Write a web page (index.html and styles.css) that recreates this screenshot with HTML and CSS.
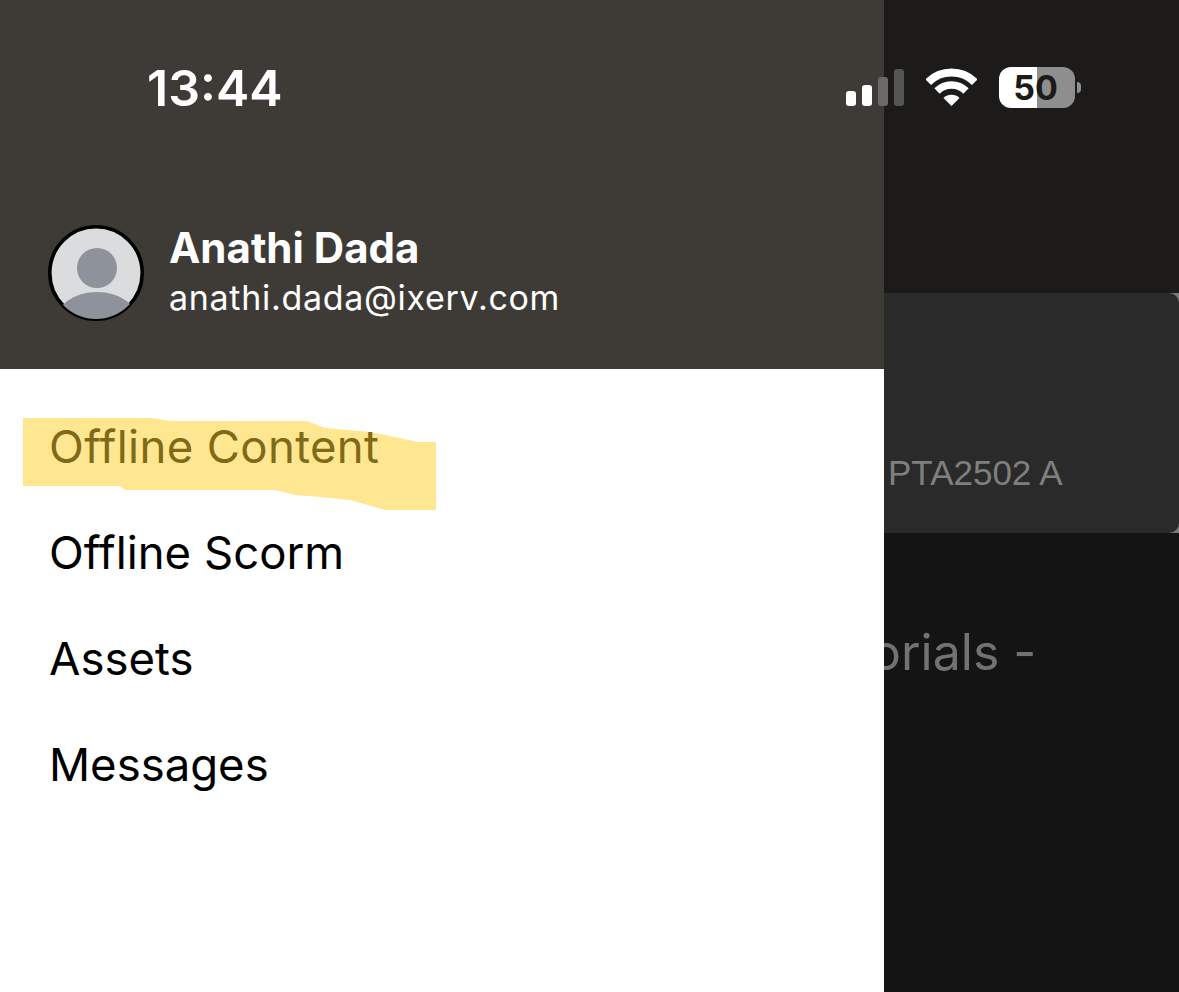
FILE: index.html
```html
<!DOCTYPE html>
<html lang="en">
<head>
    <meta charset="UTF-8">
    <title>Offline Content menu</title>
    <link rel="stylesheet" href="styles.css">
</head>
<body>
    <!-- page behind the drawer -->
    <main class="page">
        <div class="page-top"></div>
        <div class="card-row">
            <div class="card">
                <span class="card-code">PTA2502 A</span>
            </div>
        </div>
        <div class="page-rest">
            <p class="page-title">Tutorials -</p>
        </div>
    </main>

    <aside class="drawer">
        <header class="drawer-head">
            <svg class="avatar" viewBox="0 0 96 96" aria-hidden="true">
                <defs>
                    <clipPath id="avatarClip"><circle cx="48" cy="48" r="46"></circle></clipPath>
                </defs>
                <circle cx="48" cy="48" r="46.2" fill="#dbdcde" stroke="#000" stroke-width="3.6"></circle>
                <circle cx="49" cy="43" r="20" fill="#8e929b"></circle>
                <ellipse cx="49" cy="98" rx="42" ry="31" fill="#8e929b" clip-path="url(#avatarClip)"></ellipse>
            </svg>
            <div class="user">
                <div class="user-name">Anathi Dada</div>
                <div class="user-mail">anathi.dada@ixerv.com</div>
            </div>
        </header>
        <nav class="menu">
            <svg class="marker" viewBox="0 0 413 92" aria-hidden="true">
                <polygon fill="#ffe792" points="0,0 129,0 147,3 284,3 302,10 347,14 372,19 395,24 413,24 413,92 362,92 327,82 297,79 272,77 252,72 102,72 97,68 0,68"></polygon>
            </svg>
            <a class="menu-item menu-item-marked">Offline Content</a>
            <a class="menu-item">Offline Scorm</a>
            <a class="menu-item">Assets</a>
            <a class="menu-item">Messages</a>
        </nav>
    </aside>

    <!-- status bar lies over both the drawer and the page -->
    <div class="status">
        <span class="clock">13:44</span>
        <div class="signal">
            <i class="bar bar1"></i>
            <i class="bar bar2"></i>
            <i class="bar bar3"></i>
            <i class="bar bar4"></i>
        </div>
        <svg class="wifi" viewBox="0 0 51 38" aria-hidden="true">
            <path d="M2.2 14.2A33 33 0 0 1 48.8 14.2" fill="none" stroke="#fff" stroke-width="8"></path>
            <path d="M11 23A20.5 20.5 0 0 1 40 23" fill="none" stroke="#fff" stroke-width="7.5"></path>
            <path d="M25.5 38L17.5 30A11.3 11.3 0 0 1 33.5 30Z" fill="#fff"></path>
        </svg>
        <div class="battery"><span class="battery-num">50</span></div>
        <i class="battery-nub"></i>
    </div>
</body>
</html>
```

FILE: styles.css
```css
* {
    box-sizing: border-box;
}

body {
    margin: 0;
    width: 1179px;
    height: 992px;
    overflow: hidden;
    position: relative;
    font-family: Inter, "Liberation Sans", sans-serif;
    background-color: #141414;
}

.page-top {
    height: 293px;
    background-color: #1c1b1a;
}

.card-row {
    height: 240px;
    background-color: #7a7a7a;
}

.card {
    height: 100%;
    padding: 160px 0 0 888px;
    background-color: #2a2a2a;
    border-radius: 0 10px 10px 0;
}

.card-code {
    font-family: "Liberation Sans", Arial, sans-serif;
    font-size: 35px;
    line-height: 40px;
    color: #7f7f7f;
}

.page-rest {
    padding-top: 86px;
}

.page-title {
    margin: 0;
    padding-left: 797px;
    font-size: 50px;
    line-height: 66px;
    color: #727272;
    white-space: nowrap;
}

.drawer {
    position: absolute;
    top: 0;
    left: 0;
    width: 884px;
    height: 992px;
    background-color: #fff;
}

.drawer-head {
    display: flex;
    align-items: center;
    gap: 25px;
    height: 369px;
    padding: 225px 0 48px 48px;
    background-color: #3e3b37;
}

.avatar {
    width: 96px;
    height: 96px;
    flex-shrink: 0;
}

.user {
    color: #fff;
}

.user-name {
    font-size: 42px;
    font-weight: 700;
    line-height: 50px;
}

.user-mail {
    font-size: 34px;
    line-height: 50px;
    letter-spacing: 0.7px;
}

.menu {
    position: relative;
    padding-top: 25px;
}

.marker {
    position: absolute;
    top: 49px;
    left: 23px;
    width: 413px;
    height: 92px;
}

.menu-item {
    display: block;
    position: relative;
    height: 106px;
    padding-left: 49px;
    font-size: 45.5px;
    line-height: 106px;
    color: #000;
}

.menu-item-marked {
    color: #806a18;
    letter-spacing: 0.35px;
}

.status {
    position: absolute;
    top: 0;
    left: 0;
    width: 100%;
    height: 120px;
    color: #fff;
}

.clock {
    position: absolute;
    left: 147px;
    top: 58px;
    font-size: 50px;
    font-weight: 600;
    line-height: 60px;
}

.signal {
    position: absolute;
    left: 846px;
    top: 69px;
    display: flex;
    align-items: flex-end;
    gap: 6px;
    height: 37px;
}

.bar {
    display: block;
    width: 10px;
    border-radius: 3px;
    background-color: #fff;
}

.bar1 {
    height: 15px;
}

.bar2 {
    height: 21px;
}

.bar3 {
    height: 29px;
    background-color: #6a6965;
}

.bar4 {
    height: 37px;
    background-color: #555553;
}

.wifi {
    position: absolute;
    left: 926px;
    top: 68px;
    width: 51px;
    height: 38px;
}

.battery {
    position: absolute;
    left: 999px;
    top: 67px;
    width: 76px;
    height: 41px;
    padding-right: 3px;
    border-radius: 12px;
    background: linear-gradient(90deg, #fff 50%, #8e8e8e 50%);
    text-align: center;
}

.battery-num {
    font-size: 34px;
    font-weight: 700;
    line-height: 41px;
    color: #1c1b1a;
}

.battery-nub {
    position: absolute;
    left: 1077px;
    top: 82px;
    width: 4px;
    height: 11px;
    border-radius: 0 4px 4px 0;
    background-color: #8e8e8e;
}
```
